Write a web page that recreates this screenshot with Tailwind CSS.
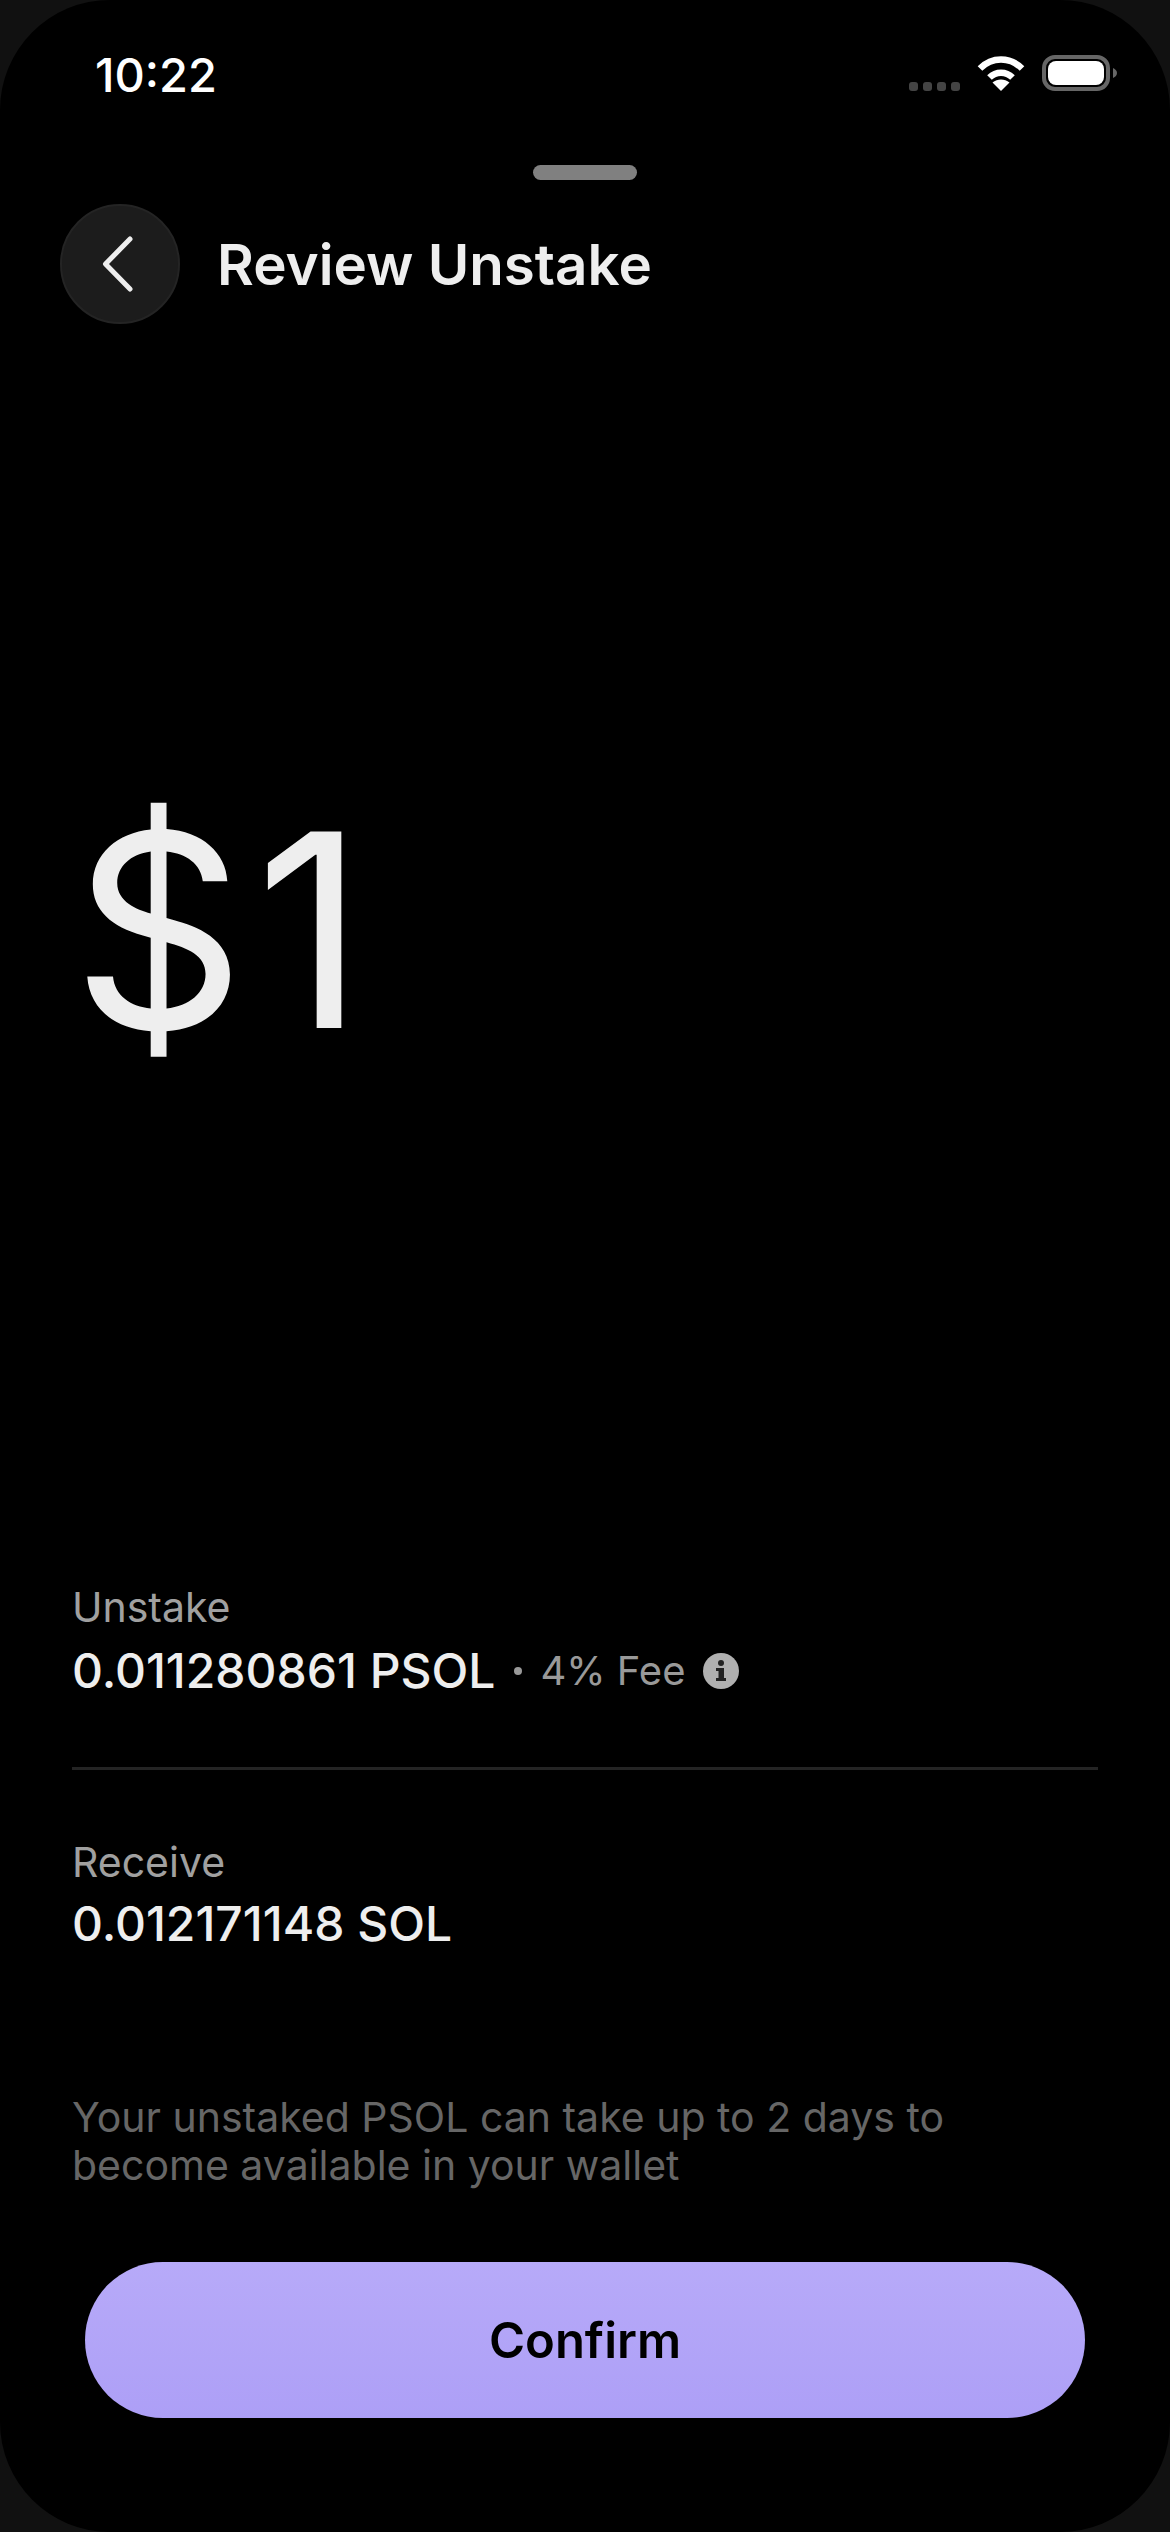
<!DOCTYPE html>
<html lang="en">
<head>
  <meta charset="UTF-8">
  <title>Review Unstake</title>
  <script src="https://cdn.jsdelivr.net/npm/@tailwindcss/browser@4"></script>
</head>
<body class="bg-[#111111] w-[1170px] h-[2532px] overflow-hidden font-['Inter',sans-serif]">
  <div class="w-[1170px] h-[2532px] bg-black rounded-[110px] flex flex-col overflow-hidden">
    <!-- status bar -->
    <div class="h-[165px] pl-[95px] pr-[53px] pt-[47px] flex justify-between items-start">
      <span class="text-white text-[47px] leading-[56px] font-medium">10:22</span>
      <div class="flex items-start pt-[8px]">
        <div class="flex gap-[5px] mt-[27px] mr-[17px]">
          <div class="w-[9px] h-[9px] rounded-[3px] bg-[#444444]"></div>
          <div class="w-[9px] h-[9px] rounded-[3px] bg-[#444444]"></div>
          <div class="w-[9px] h-[9px] rounded-[3px] bg-[#444444]"></div>
          <div class="w-[9px] h-[9px] rounded-[3px] bg-[#444444]"></div>
        </div>
        <svg class="w-[48px] h-[36px] mr-[17px]" viewBox="0 0 48 36" fill="none" stroke="#fff" stroke-width="6.5">
          <path d="M3 13.5C15 1.5 33 1.5 45 13.5"/>
          <path d="M12.5 22.5C19 16 29 16 35.5 22.5"/>
          <path d="M24 36L15.5 27.5C20.5 23.5 27.5 23.5 32.5 27.5Z" fill="#fff" stroke="none"/>
        </svg>
        <svg class="w-[75px] h-[36px]" viewBox="0 0 75 36" fill="none">
          <rect x="2" y="2" width="64" height="32" rx="11" stroke="#666" stroke-width="4"/>
          <rect x="6" y="6" width="56" height="24" rx="8" fill="#fff"/>
          <path d="M71 13C73.5 14 75 16 75 18C75 20 73.5 22 71 23Z" fill="#666"/>
        </svg>
      </div>
    </div>
    <!-- sheet grabber -->
    <div class="h-[15px] w-[104px] rounded-full bg-[#808080] ml-[533px]"></div>
    <!-- header -->
    <div class="flex items-center gap-[37px] pl-[60px] mt-[24px]">
      <button class="w-[120px] h-[120px] rounded-full bg-[#1c1c1c] border-2 border-[#242424] flex items-center justify-center">
        <svg class="w-[36px] h-[60px] mr-[4px]" viewBox="0 0 36 60" fill="none" stroke="#eeeeee" stroke-width="5" stroke-linecap="round" stroke-linejoin="round">
          <path d="M30 5L5.5 30L30 55"/>
        </svg>
      </button>
      <h1 class="text-[#eeeeee] text-[56.5px] leading-[68px] font-semibold pt-[2px]">Review Unstake</h1>
    </div>
    <!-- amount -->
    <div class="pl-[72px] mt-[434px] h-[344px] flex items-center">
      <span class="text-[#eeeeee] text-[270px] leading-[344px] font-normal tracking-[10px]">$1</span>
    </div>
    <!-- details -->
    <div class="flex-1 flex flex-col pl-[72px] pr-[72px] mt-[481px]">
      <span class="text-[#a0a0a0] text-[41px] leading-[48px]">Unstake</span>
      <div class="flex items-center mt-[12px]">
        <span class="text-[#eeeeee] text-[48px] leading-[56px] font-medium">0.011280861 PSOL</span>
        <span class="w-[8px] h-[8px] rounded-full bg-[#999999] ml-[19px]"></span>
        <span class="text-[#999999] text-[40px] leading-[56px] ml-[18px]">4% Fee</span>
        <svg class="w-[36px] h-[36px] ml-[17px]" viewBox="0 0 36 36">
          <circle cx="18" cy="18" r="18" fill="#b0b0b0"/>
          <rect x="15.5" y="15" width="5.5" height="12" fill="#222"/>
          <rect x="13" y="15" width="4" height="3" fill="#222"/>
          <rect x="13" y="25" width="10" height="3" fill="#222"/>
          <circle cx="18" cy="10" r="3" fill="#222"/>
        </svg>
      </div>
      <div class="h-[3px] bg-[#242424] mt-[68px]"></div>
      <span class="text-[#a0a0a0] text-[41px] leading-[48px] mt-[68px]">Receive</span>
      <span class="text-[#eeeeee] text-[48px] leading-[56px] font-medium mt-[10px]">0.012171148 SOL</span>
      <p class="text-[#666666] text-[41px] leading-[48px] mt-[141px] w-[950px]">Your unstaked PSOL can take up to 2 days to become available in your wallet</p>
    </div>
    <!-- confirm -->
    <div class="px-[85px] pb-[114px]">
      <button class="w-full h-[156px] pt-[2px] rounded-full bg-gradient-to-b from-[#b7aaf9] to-[#ad9ff6] text-black text-[49px] font-semibold">Confirm</button>
    </div>
  </div>
</body>
</html>
